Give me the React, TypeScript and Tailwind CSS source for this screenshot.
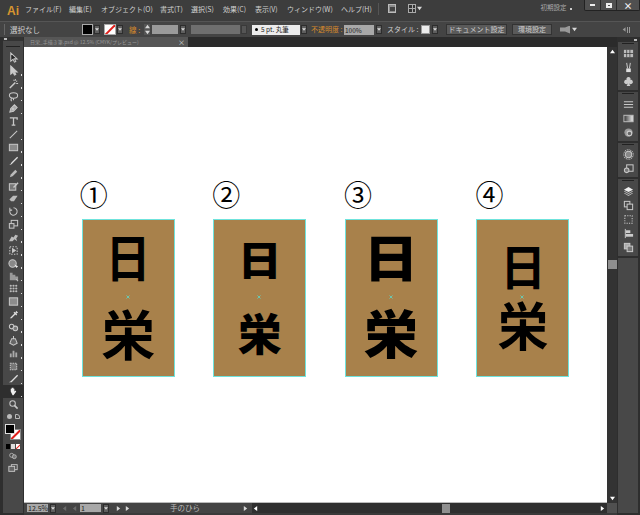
import React from "react";

const S = ({ children, size = 11, fill = "none" }: { children: React.ReactNode; size?: number; fill?: string }) => (
  <svg width={size} height={size} viewBox="0 0 12 12" fill={fill} stroke="#c8c8c8" strokeWidth="1.1">
    {children}
  </svg>
);

const leftTools: React.ReactNode[] = [
  <path d="M3 1v9l2.500-2 1.500 3 1.500-.7L7 7.500h3z" fill="#222" />,
  <path d="M3 1v9l2.500-2 1.500 3 1.500-.7L7 7.500h3z" fill="#ccc" />,
  <><path d="M2 11l6-6" strokeWidth="1.600" /><path d="M8 1v2M10 3l-1 1M11 6H9M6 2l1 1" /></>,
  <><ellipse cx="6" cy="5" rx="4.500" ry="3" /><path d="M4 8c-1 1-1 2 0 3M6 8v2" /></>,
  <><path d="M2 10l1-4 4-4 3 3-4 4z" fill="#aaa" /><circle cx="5.500" cy="6.500" r=".8" fill="#222" /></>,
  <path d="M2 2h8v2M6 2v8M4 10h4" strokeWidth="1.400" />,
  <path d="M2 10l8-8" />,
  <rect x="1.500" y="2.500" width="9" height="7" fill="#8a8a8a" />,
  <path d="M1 11c2 0 2-2 3-3l6-6 1 1-6 6c-1 1-2 2-4 2z" fill="#ddd" stroke="none" />,
  <path d="M2 10l1-3 5-5 2 2-5 5z" fill="#bbb" stroke="none" />,
  <><rect x="1.500" y="3" width="7" height="7" fill="#777" /><path d="M6 7l5-5" strokeWidth="1.500" /></>,
  <path d="M1.500 7l4-4h5L6.500 9h-3z" fill="#bbb" stroke="none" />,
  <path d="M6 2a4 4 0 1 1-3.500 2M2 2v2.500h2.500" />,
  <><rect x="3.500" y="1.500" width="7" height="6" /><rect x="1.500" y="5" width="5" height="5" fill="#555" /></>,
  <path d="M1 10l3-5 2 1 2-3 3 1-2 3 1 3-3-2-2 2z" fill="#bbb" stroke="none" />,
  <><rect x="2" y="2" width="8" height="8" strokeDasharray="1.500 1.500" /><path d="M5 4l3 2-3 2z" fill="#ccc" /></>,
  <><circle cx="5" cy="6" r="4" fill="#888" /><path d="M7 7l4 2-2 2z" fill="#eee" stroke="none" /></>,
  <><path d="M2 10V2h3v2h3v2h3v4z" fill="#999" stroke="none" /><path d="M9 9l2 2" /></>,
  <g fill="#bbb" stroke="none"><circle cx="3" cy="3" r="1.200" /><circle cx="6" cy="3" r="1.200" /><circle cx="9" cy="3" r="1.200" /><circle cx="3" cy="6" r="1.200" /><circle cx="6" cy="6" r="1.200" /><circle cx="9" cy="6" r="1.200" /><circle cx="3" cy="9" r="1.200" /><circle cx="6" cy="9" r="1.200" /><circle cx="9" cy="9" r="1.200" /></g>,
  <rect x="1.500" y="2" width="9" height="8" fill="#8c8c8c" />,
  <path d="M2 10l1-1 4-4-1-1 1-1 1 1 1-2 2 2-2 1 1 1-1 1-1-1-4 4z" fill="#ddd" stroke="none" />,
  <><circle cx="4" cy="5" r="2.500" /><circle cx="8" cy="7" r="2.500" fill="#777" /></>,
  <><path d="M6 1v3M4 4h4l2 5-4 2-4-2z" fill="#666" /></>,
  <path d="M2 10V6h2v4zM5 10V3h2v7zM8 10V5h2v5z" fill="#aaa" stroke="none" />,
  <><rect x="2.500" y="2.500" width="7" height="7" fill="#777" strokeDasharray="1.500 1" /></>,
  <path d="M1 10l2-1 7-7 1 1-7 7z" fill="#ddd" stroke="none" />,
  <path d="M3 6V3h1v2-3h1v3-3h1v3-2h1v3l1-1 1 1-3 4H5z" fill="#eee" stroke="none" />,
  <><circle cx="5" cy="5" r="3" /><path d="M7 7l3.500 3.500" strokeWidth="1.800" /></>,
];

const Arrow = ({ d = "dn", c = "#d8d8d8" }: { d?: string; c?: string }) => (
  <svg width="5" height="5" viewBox="0 0 6 6" fill={c}>
    {d === "dn" && <path d="M0 1h6L3 5z" />}
    {d === "up" && <path d="M0 5h6L3 1z" />}
    {d === "r" && <path d="M1 0v6l4-3z" />}
    {d === "l" && <path d="M5 0v6L1 3z" />}
  </svg>
);

const Drop = ({ ml }: { ml: string }) => (
  <div className={`${ml} w-[6px] h-[9px] bg-[#5e5e5e] border border-[#2d2d2d] flex items-center justify-center`}>
    <Arrow />
  </div>
);

const rightGroups: { h: string; icons: React.ReactNode[] }[] = [
  {
    h: "h-[50px]",
    icons: [
      <g fill="#bbb" stroke="none"><rect x="1" y="2" width="10" height="8" /><path d="M4 2v8M7.500 2v8M1 6h10" stroke="#333" strokeWidth=".8" /></g>,
      <><path d="M4 1l1 6M8 1L7 7" /><rect x="3.500" y="7" width="5" height="4" fill="#ddd" stroke="none" /></>,
      <path d="M6 1a2.200 2.200 0 0 1 2 3.300A2.300 2.300 0 1 1 6.700 8L8 11H4l1.300-3A2.300 2.300 0 1 1 4 4.300 2.200 2.200 0 0 1 6 1z" fill="#ccc" stroke="none" />,
    ],
  },
  {
    h: "h-[51px]",
    icons: [
      <path d="M1 3h10M1 6h10M1 9h10" strokeWidth="1.300" />,
      <><defs><linearGradient id="g1"><stop offset="0" stopColor="#333" /><stop offset="1" stopColor="#eee" /></linearGradient></defs><rect x="1" y="2.500" width="10" height="7" fill="url(#g1)" stroke="#bbb" /></>,
      <><circle cx="6" cy="6" r="4.500" fill="#999" stroke="none" /><circle cx="7" cy="7" r="2.500" fill="#666" stroke="#ccc" /></>,
    ],
  },
  {
    h: "h-[36px]",
    icons: [
      <><circle cx="6" cy="6" r="3.500" fill="#888" /><circle cx="6" cy="6" r="5.200" strokeDasharray="1 1" /></>,
      <><rect x="4" y="2" width="7" height="7" /><circle cx="4" cy="8" r="2.500" fill="#777" /></>,
    ],
  },
  {
    h: "h-[79px]",
    icons: [
      <g stroke="none"><path d="M6 6.500L1 4l5-3 5 3z" fill="#eee" /><path d="M1 6l5 2.800L11 6l-1-.5-4 2.200-4-2.200zM1 8l5 3 5-3-1-.5L6 9.700 2 7.500z" fill="#bbb" /></g>,
      <><rect x="1.500" y="1.500" width="6" height="6" /><rect x="4.500" y="4.500" width="6" height="6" fill="#444" /></>,
      <rect x="2" y="2" width="8" height="8" strokeDasharray="1.300 1.300" />,
      <g stroke="none" fill="#ccc"><rect x="2" y="1" width="1" height="10" /><rect x="3" y="2.500" width="5" height="3" /><rect x="3" y="6.500" width="8" height="3" /></g>,
      <><rect x="1.500" y="1.500" width="6" height="6" fill="#aaa" /><rect x="4.500" y="4.500" width="6" height="6" fill="#777" /></>,
    ],
  },
];

const menus: [string, string][] = [
  ["ファイル(F)", "w-[44px]"],
  ["編集(E)", "w-[32px]"],
  ["オブジェクト(O)", "w-[59px]"],
  ["書式(T)", "w-[31px]"],
  ["選択(S)", "w-[32px]"],
  ["効果(C)", "w-[32px]"],
  ["表示(V)", "w-[32px]"],
  ["ウィンドウ(W)", "w-[54px]"],
  ["ヘルプ(H)", "w-[37px]"],
];

const Card = ({ n, numCls, top, bottom, weight, topCls, botCls }: { n: string; numCls: string; top: string; bottom: string; weight: string; topCls: string; botCls: string }) => (
  <div className="w-[93px] flex flex-col">
    <div className={`text-[28px] leading-[34px] h-[34px] text-black font-['Liberation_Sans','Noto_Sans_CJK_JP',sans-serif] ${numCls}`}>{n}</div>
    <div className="relative mt-[5px] w-[93px] h-[158px] bg-[#a8814b] border border-[#6fe3dc] flex flex-col items-center text-black font-['Noto_Sans_CJK_JP',sans-serif]">
      <div className={`${weight} leading-none ${topCls}`}>{top}</div>
      <div className={`${weight} leading-none ${botCls}`}>{bottom}</div>
      <svg className="absolute left-[43px] top-[75px]" width="4" height="4" viewBox="0 0 4 4" stroke="#5fd8c8" strokeWidth="0.800">
        <path d="M0.500 0.500l3 3M3.500 0.500l-3 3" />
      </svg>
    </div>
  </div>
);

export default function App() {
  return (
    <div className="w-[640px] h-[515px] overflow-hidden bg-[#333333] flex flex-col text-[#cfcfcf] text-[7.500px] font-['Noto_Sans_CJK_JP','Liberation_Sans',sans-serif]">
      {/* menu bar */}
      <div className="h-[21px] shrink-0 bg-[#3d3d3d] flex items-start">
        <div className="w-[27px] h-[21px] pl-[7px] flex items-center text-[12px] font-bold text-[#d8962f] font-['Liberation_Sans',sans-serif]">Ai</div>
        <div className="flex h-[18px] items-center text-[7px]">
          {menus.map(([t, w]) => (
            <div key={t} className={`${w} whitespace-nowrap`}>{t}</div>
          ))}
        </div>
        <div className="w-px h-[12px] mt-[3px] bg-[#555]" />
        <div className="ml-[9px] mt-[4px] w-[9px] h-[9px] bg-[#8a8a8a] border border-[#bbb] flex items-center justify-center">
          <div className="w-[5px] h-[4px] bg-[#444]" />
        </div>
        <div className="ml-[12px] mt-[4px] w-[9px] h-[9px] bg-[#aaa] grid grid-cols-2 gap-[1px] p-[1px]">
          <div className="bg-[#333]" /><div className="bg-[#333]" /><div className="bg-[#333]" /><div className="bg-[#333]" />
        </div>
        <div className="ml-[1px] mt-[6px]"><Arrow /></div>
        <div className="ml-[118px] mt-[3px] w-[32px] whitespace-nowrap text-[6.500px] text-[#aaa]">初期設定</div>
        <div className="ml-[1px] mt-[8px] w-[2px] h-[2px] bg-[#ccc]" />
        <div className="ml-[12px] flex h-[11px] bg-[#505050] border border-[#222] border-t-0 rounded-b-[2px]">
          <div className="w-[16px] flex items-center justify-center border-r border-[#2a2a2a]"><div className="w-[5px] h-[2px] bg-[#eee]" /></div>
          <div className="w-[16px] flex items-center justify-center border-r border-[#2a2a2a]"><div className="w-[6px] h-[5px] border-2 border-[#eee]" /></div>
          <div className="w-[22px] flex items-center justify-center text-[9px] font-bold text-[#eee] leading-none">×</div>
        </div>
      </div>

      {/* control bar */}
      <div className="h-[16px] shrink-0 bg-[#444444] flex items-center border-t border-[#555]">
        <div className="ml-[4px] w-px h-[11px] bg-[#666]" />
        <div className="ml-[5px] w-[30px] whitespace-nowrap">選択なし</div>
        <div className="ml-[42px] w-[11px] h-[11px] bg-black border border-[#aaa]" />
        <Drop ml="ml-[1px]" />
        <div className="ml-[4px] w-[12px] h-[11px] bg-white border border-[#aaa] flex items-center justify-center overflow-hidden">
          <div className="w-[14px] h-[1.500px] bg-[#e0201c] -rotate-45 shrink-0" />
        </div>
        <Drop ml="ml-[1px]" />
        <div className="ml-[6px] w-[11px] text-[#d58a2c] whitespace-nowrap">線 :</div>
        <div className="ml-[4px] w-[6px] h-[11px] bg-[#555] flex flex-col items-center justify-center gap-[1px]">
          <Arrow d="up" /><Arrow />
        </div>
        <div className="ml-[2px] w-[26px] h-[9px] bg-[#9a9a9a]" />
        <Drop ml="ml-[2px]" />
        <div className="ml-[5px] w-[49px] h-[9px] bg-[#6f6f6f]" />
        <div className="ml-[1px] w-[6px] h-[9px] bg-[#555] border border-[#3a3a3a]" />
        <div className="ml-[5px] w-[48px] h-[10px] bg-[#ececec] text-[#222] flex items-center pl-[3px] gap-[3px] text-[6.500px] whitespace-nowrap">
          <div className="w-[3px] h-[3px] rounded-full bg-black" />
          <span>5 pt. 丸筆</span>
        </div>
        <Drop ml="ml-[1px]" />
        <div className="ml-[4px] w-[33px] text-[#d58a2c] whitespace-nowrap text-[7px]">不透明度 :</div>
        <div className="w-[30px] h-[10px] bg-[#a8a8a8] text-[#222] pl-[1px] leading-[10px] text-[6.500px]">100%</div>
        <Drop ml="ml-[2px]" />
        <div className="ml-[5px] w-[34px] whitespace-nowrap text-[7px]">スタイル :</div>
        <div className="w-[9px] h-[9px] bg-[#ececec] border border-[#999]" />
        <Drop ml="ml-[2px]" />
        <div className="ml-[8px] w-[61px] h-[11px] bg-[#5a5a5a] border border-[#333] flex items-center justify-center whitespace-nowrap text-[7px]">ドキュメント設定</div>
        <div className="ml-[5px] w-[40px] h-[11px] bg-[#5a5a5a] border border-[#333] flex items-center justify-center whitespace-nowrap text-[7px]">環境設定</div>
        <div className="ml-[8px] w-[10px] h-[8px] bg-[#999]" style={{ clipPath: "polygon(0 25%,50% 25%,100% 0,100% 100%,50% 75%,0 75%)" }} />
        <div className="ml-[2px]"><Arrow /></div>
        <div className="ml-[45px] w-[8px] h-[6px] flex gap-[1px] items-center"><Arrow d="l" c="#999" /><div className="w-[1px] h-[6px] bg-[#999]" /><div className="w-[1px] h-[6px] bg-[#999]" /></div>
      </div>

      {/* workspace */}
      <div className="flex-1 min-h-0 flex">
        {/* left tools */}
        <div className="w-[24px] shrink-0 pl-[3px] pr-[1px] pb-[2px] bg-[#2e2e2e] flex flex-col">
          <div className="h-[4px] bg-[#333] flex items-center">
            <div className="w-[3px] h-[2px] bg-[#bbb] ml-[1px]" />
          </div>
          <div className="flex-1 bg-[#484848] flex flex-col items-center">
            <div className="w-[14px] h-[1px] mt-[5px] bg-[#222]" />
            <div className="h-[4px]" />
            <div className="flex flex-col w-full">
              {leftTools.map((t, i) => (
                <div key={i} className={`relative h-[12.860px] flex items-center justify-center ${i === 26 ? "bg-[#2e2e2e]" : ""}`}>
                  <S>{t}</S>
                  {i !== 0 && i !== 5 && i !== 27 && <div className="absolute right-[1px] bottom-[1px] w-[1.500px] h-[1.500px] bg-[#ddd]" />}
                </div>
              ))}
            </div>
            <div className="flex gap-[3px] mt-[1px] h-[9px] items-center">
              <div className="w-[5px] h-[5px] rounded-full bg-[#bbb]" />
              <div className="w-[5px] h-[5px] border border-[#bbb] rounded-tr-[3px]" />
            </div>
            <div className="relative w-[16px] h-[16px] mt-[3px]">
              <div className="absolute right-0 bottom-0 w-[11px] h-[11px] bg-white border border-[#888] overflow-hidden flex items-center justify-center">
                <div className="w-[15px] h-[2px] bg-[#e0201c] -rotate-45 shrink-0" />
              </div>
              <div className="absolute left-0 top-0 w-[10px] h-[10px] bg-black border border-[#ddd]" />
            </div>
            <div className="flex gap-[1px] mt-[4px]">
              <div className="w-[4px] h-[5px] bg-black" />
              <div className="w-[4px] h-[5px] bg-[#ddd]" />
              <div className="w-[4px] h-[5px] bg-white overflow-hidden flex items-center justify-center"><div className="w-[7px] h-[1px] bg-[#e0201c] -rotate-45 shrink-0" /></div>
            </div>
            <div className="mt-[3px]"><S size={8}><circle cx="4" cy="5" r="3" /><circle cx="8" cy="7" r="3" fill="#777" /></S></div>
            <div className="mt-[3px]"><S size={10}><rect x="4" y="2" width="7" height="6" /><rect x="1" y="4" width="7" height="6" fill="#666" /></S></div>
          </div>
        </div>

        {/* document */}
        <div className="flex-1 min-w-0 flex flex-col">
          <div className="h-[10px] shrink-0 flex bg-[#2b2b2b]">
            <div className="w-[164px] h-[10px] bg-[#565656] flex items-center pl-[6px] text-[5px] text-[#999] whitespace-nowrap overflow-hidden">
              <span className="w-[146px] overflow-hidden">日栄_手描き筆.psd @ 12.5% (CMYK/プレビュー)</span>
              <span className="ml-[2px] text-[7px] text-[#ddd] leading-none">×</span>
            </div>
          </div>
          <div className="flex-1 min-h-0 flex">
            {/* canvas */}
            <div className="flex-1 bg-white border-b border-[#bbb] pl-[57.700px] pt-[133px] flex gap-[38.600px] items-start">
              <Card n="①" numCls="-ml-[2px]" top="日" bottom="栄" weight="font-bold" topCls="text-[50px] mt-[10px] scale-x-[0.9]" botCls="text-[54px] mt-[26px]" />
              <Card n="②" numCls="-ml-[1px]" top="日" bottom="栄" weight="font-black" topCls="text-[44px] mt-[16px] scale-y-[0.9]" botCls="text-[44px] mt-[30px]" />
              <Card n="③" numCls="-ml-[1px]" top="日" bottom="栄" weight="font-black" topCls="text-[50px] mt-[10px] scale-x-[1.100]" botCls="text-[52px] mt-[26px] scale-x-[1.050]" />
              <Card n="④" numCls="-ml-[1px]" top="日" bottom="栄" weight="font-bold" topCls="text-[48px] mt-[20px] scale-x-[0.950]" botCls="text-[52px] mt-[10px] scale-x-[0.980]" />
            </div>
            {/* v scroll */}
            <div className="w-[10px] shrink-0 bg-[#333] flex flex-col items-center">
              <div className="h-[9px] flex items-center"><Arrow d="up" c="#fff" /></div>
              <div className="h-[204px]" />
              <div className="w-[9px] h-[9px] bg-[#8f8f8f]" />
              <div className="flex-1" />
              <div className="h-[10px] flex items-center"><Arrow c="#fff" /></div>
            </div>
          </div>
          {/* status */}
          <div className="h-[10px] shrink-0 flex items-center bg-[#444]">
            <div className="ml-[3px] w-[21px] h-[8px] bg-[#a8a8a8] text-[#222] text-[7px] leading-[8px] pl-[1px] whitespace-nowrap">12.5%</div>
            <Drop ml="ml-[2px]" />
            <div className="ml-[6px] w-[5px]"><Arrow d="l" c="#6a6a6a" /></div>
            <div className="ml-[5px] w-[5px]"><Arrow d="l" c="#6a6a6a" /></div>
            <div className="ml-[3px] w-[21px] h-[8px] bg-[#a8a8a8] text-[#222] text-[7px] leading-[8px] pl-[1px]">1</div>
            <Drop ml="ml-[2px]" />
            <div className="ml-[7px] w-[5px]"><Arrow d="r" /></div>
            <div className="ml-[4px] w-[5px]"><Arrow d="r" /></div>
            <div className="w-[110px] text-center whitespace-nowrap text-[#bbb]">手のひら</div>
            <div className="ml-[3px] w-[5px]"><Arrow d="r" /></div>
            <div className="flex-1 h-[10px] ml-[4px] bg-[#2f2f2f] flex items-center">
              <div className="ml-[1px] w-[5px]"><Arrow d="l" c="#fff" /></div>
              <div className="ml-[184px] w-[8px] h-[9px] bg-[#8f8f8f]" />
              <div className="flex-1" />
              <div className="mr-[2px] w-[5px]"><Arrow d="r" c="#fff" /></div>
            </div>
            <div className="w-[10px] h-[10px] bg-[#505050]" />
          </div>
          <div className="h-[2px] shrink-0 bg-[#3a3a3a]" />
        </div>

        {/* right panel */}
        <div className="w-[23px] shrink-0 pb-[2px] pr-[2px] bg-[#2e2e2e] flex flex-col pl-[1px]">
          <div className="h-[5px] flex justify-end items-center pr-[1px]"><div className="w-[3px] h-[2px] bg-[#bbb]" /></div>
          <div className="flex-1 bg-[#484848] flex flex-col">
            {rightGroups.map((g, i) => (
              <div key={i} className={`${g.h} border-b-2 border-[#2e2e2e] flex flex-col items-center pt-[1px]`}>
                <div className="w-[12px] h-[1px] bg-[#222] mb-[3px]" />
                <div className="flex-1 flex flex-col justify-around items-center pb-[2px]">
                  {g.icons.map((ic, j) => (
                    <S key={j} size={11}>{ic}</S>
                  ))}
                </div>
              </div>
            ))}
          </div>
        </div>
      </div>
    </div>
  );
}
